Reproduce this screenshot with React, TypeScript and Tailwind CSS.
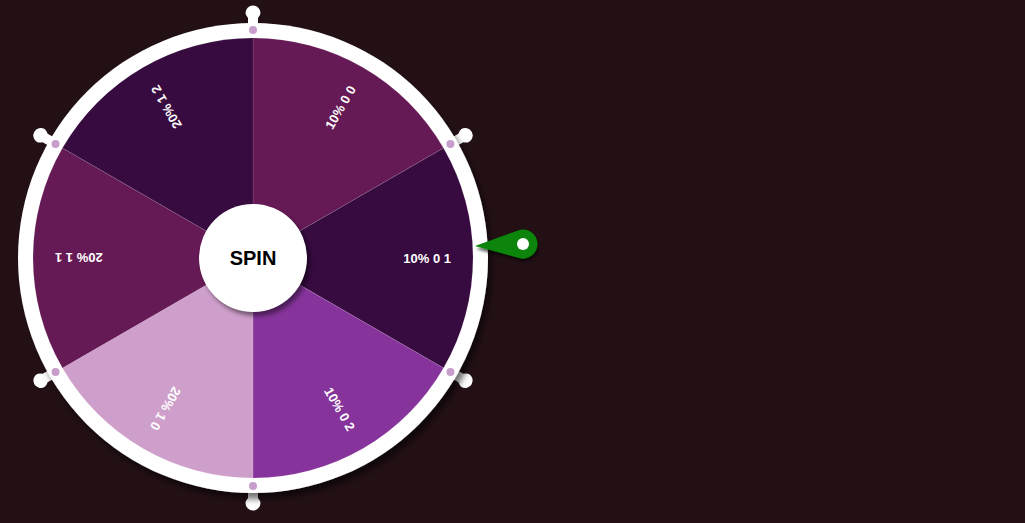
import React from "react";

const CX = 253;
const CY = 258;
const R = 220;

const segments = [
  { color: "#661a55", label: "10% 0 0" },
  { color: "#370a40", label: "10% 0 1" },
  { color: "#86349b", label: "10% 0 2" },
  { color: "#cf9fcb", label: "20% 1 0" },
  { color: "#661a55", label: "20% 1 1" },
  { color: "#370a40", label: "20% 1 2" },
];

function pt(angleDeg: number, r: number) {
  const a = (angleDeg * Math.PI) / 180;
  return [CX + r * Math.sin(a), CY - r * Math.cos(a)];
}

function segPath(i: number) {
  const a0 = i * 60;
  const a1 = a0 + 60;
  const [x0, y0] = pt(a0, R);
  const [x1, y1] = pt(a1, R);
  return `M${CX} ${CY} L${x0} ${y0} A${R} ${R} 0 0 1 ${x1} ${y1} Z`;
}

export default function App() {
  return (
    <div className="relative h-screen w-full overflow-hidden bg-[#231015] font-['Liberation_Sans',Arial,sans-serif]">
      <svg width={560} height={523} viewBox="0 0 560 523" className="block">
        <defs>
          <filter id="ringShadow" x="-10%" y="-10%" width="125%" height="125%">
            <feDropShadow dx="4" dy="6" stdDeviation="3" floodColor="#000" floodOpacity="0.55" />
          </filter>
          <filter id="ptrShadow" x="-20%" y="-30%" width="150%" height="180%">
            <feDropShadow dx="1" dy="3" stdDeviation="1.5" floodColor="#000" floodOpacity="0.6" />
          </filter>
        </defs>

        {/* pegs */}
        {[0, 60, 120, 180, 240, 300].map((a) => (
          <g key={a} transform={`rotate(${a} ${CX} ${CY})`}>
            <path
              d={`M${CX - 5} ${CY - 230} L${CX - 5} ${CY - 240} Q${CX - 7.5} ${CY - 243} ${CX - 7.5} ${CY - 245} A7.5 7.5 0 0 1 ${CX + 7.5} ${CY - 245} Q${CX + 7.5} ${CY - 243} ${CX + 5} ${CY - 240} L${CX + 5} ${CY - 230} Z`}
              fill="#ffffff"
            />
          </g>
        ))}

        {/* ring */}
        <circle cx={CX} cy={CY} r={235} fill="#ffffff" filter="url(#ringShadow)" />

        {/* segments */}
        {segments.map((s, i) => (
          <path key={i} d={segPath(i)} fill={s.color} stroke="rgba(255,255,255,0.18)" strokeWidth={0.6} />
        ))}

        {/* labels */}
        {segments.map((s, i) => {
          const theta = i * 60 + 30;
          return (
            <g key={`l${i}`} transform={`rotate(${theta - 90} ${CX} ${CY})`}>
              <text
                x={CX + 198}
                y={CY + 5}
                textAnchor="end"
                fill="#ffffff"
                fontSize={13}
                fontWeight={700}
                fontFamily='"Liberation Sans", Arial, sans-serif'
              >
                {s.label}
              </text>
            </g>
          );
        })}

        {/* dots */}
        {[0, 60, 120, 180, 240, 300].map((a) => {
          const [x, y] = pt(a, 228);
          return <circle key={`d${a}`} cx={x} cy={y} r={4} fill="#c79ecb" />;
        })}

        {/* pointer */}
        <g filter="url(#ptrShadow)">
          <path d="M475 246 L518 230.4 A14.5 14.5 0 1 1 519.2 258 Z" fill="#078507" />
        </g>
        <circle cx={523} cy={244} r={6} fill="#ffffff" />
      </svg>

      <button className="absolute left-[199px] top-[204px] flex h-[108px] w-[108px] items-center justify-center rounded-full bg-white font-['Liberation_Sans',Arial,sans-serif] text-[20px] font-bold text-black shadow-[3px_4px_4px_rgba(0,0,0,0.45)]">
        SPIN
      </button>
    </div>
  );
}
